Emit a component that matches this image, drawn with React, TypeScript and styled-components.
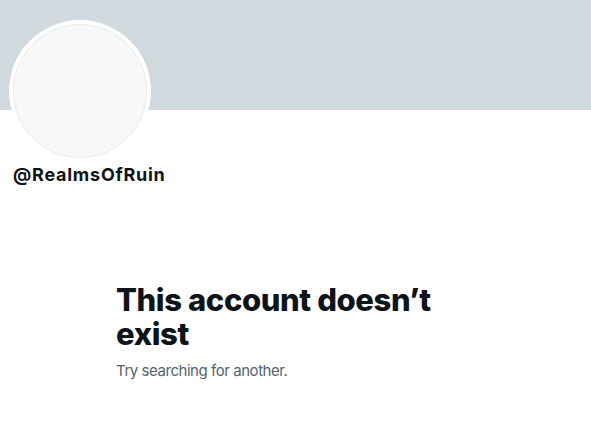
import React from 'react'
import styled, { createGlobalStyle } from 'styled-components'

const GlobalStyle = createGlobalStyle`
  html, body {
    margin: 0;
    padding: 0;
    background: #ffffff;
    font-family: Inter, "Noto Sans", sans-serif;
  }
`

export default function App() {
  return (
    <Page>
      <GlobalStyle />
      <Banner />
      <ProfileHead>
        <Avatar>
          <AvatarInner />
        </Avatar>
        <Handle>@RealmsOfRuin</Handle>
      </ProfileHead>
      <Empty>
        <EmptyTitle>This account doesn’t exist</EmptyTitle>
        <EmptyText>Try searching for another.</EmptyText>
      </Empty>
    </Page>
  )
}

const Page = styled.div`
  display: flex;
  flex-direction: column;
  width: 591px;
  height: 433px;
  overflow: hidden;
`

const Banner = styled.div`
  height: 110px;
  background-color: #cfd9de;
`

const ProfileHead = styled.div`
  display: flex;
  flex-direction: column;
  padding-left: 9px;
`

const Avatar = styled.div`
  width: 142px;
  height: 142px;
  margin-top: -90px;
  box-sizing: border-box;
  border-radius: 50%;
  background: #ffffff;
  padding: 4px;
`

const AvatarInner = styled.div`
  width: 100%;
  height: 100%;
  box-sizing: border-box;
  border-radius: 50%;
  background: #f7f9f9;
  border: 1px solid #e6ebee;
`

const Handle = styled.div`
  margin-top: 1px;
  margin-left: 4px;
  font-size: 18px;
  line-height: 24px;
  font-weight: 700;
  letter-spacing: 0.75px;
  color: #0f1419;
`

const Empty = styled.div`
  display: flex;
  flex-direction: column;
  margin: 96px 0 0 116px;
  width: 340px;
`

const EmptyTitle = styled.h1`
  margin: 0;
  font-size: 31px;
  line-height: 34px;
  font-weight: 800;
  letter-spacing: -0.4px;
  color: #0f1419;
`

const EmptyText = styled.p`
  margin: 10px 0 0;
  font-size: 15px;
  line-height: 20px;
  letter-spacing: -0.45px;
  color: #536471;
`
